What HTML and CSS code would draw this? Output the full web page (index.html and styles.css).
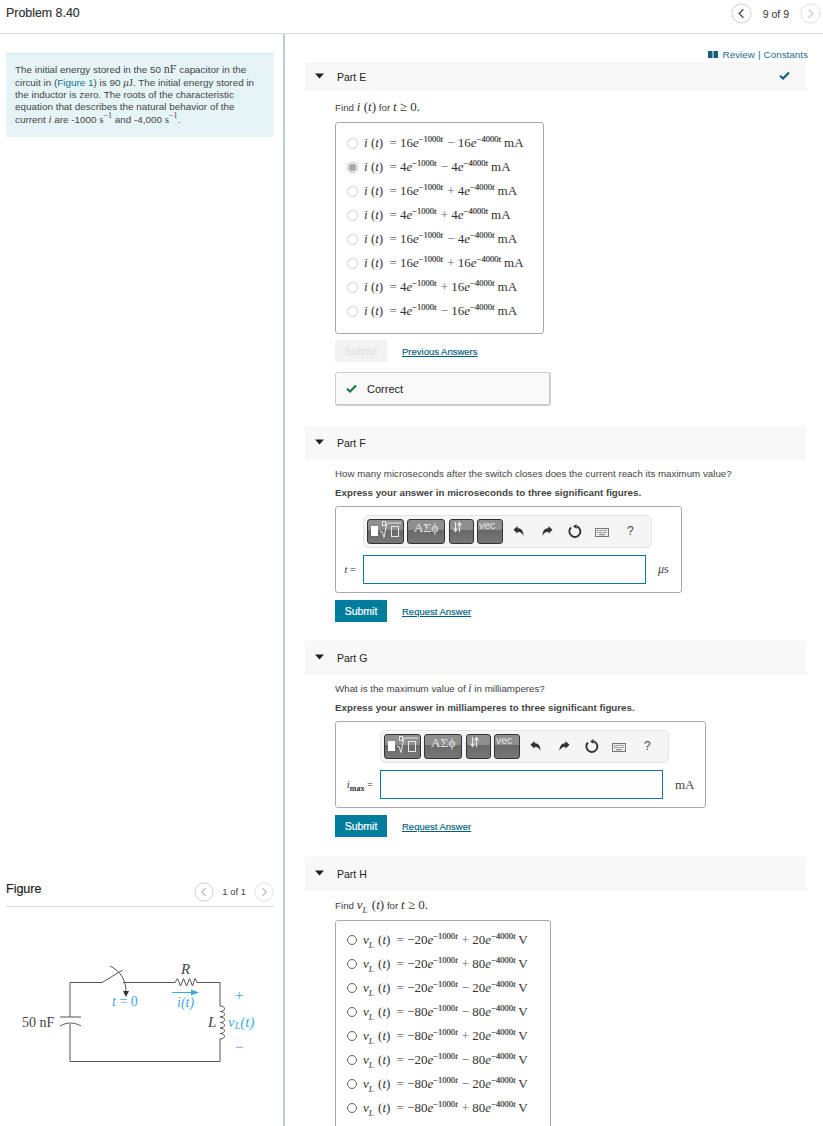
FILE: index.html
```html
<!DOCTYPE html>
<html lang="en">
<head>
<meta charset="utf-8">
<title>Problem 8.40</title>
<link rel="stylesheet" href="styles.css">
</head>
<body>
<svg class="sprites" width="0" height="0" aria-hidden="true">
  <symbol id="undo" viewBox="0 0 12 12"><path d="M0.500 4.500 5 0.500V3c4 0 6.500 2.500 6.500 8.500C10 8 8 6.800 5 6.800V9z" fill="#333"/></symbol>
  <symbol id="redo" viewBox="0 0 12 12"><path d="M11.500 4.500 7 0.500V3c-4 0-6.500 2.500-6.500 8.500C2 8 4 6.800 7 6.800V9z" fill="#333"/></symbol>
  <symbol id="reset" viewBox="0 0 14 14"><path d="M8.800 2.300A5.500 5.500 0 1 1 3 3.500" fill="none" stroke="#333" stroke-width="1.900"/><path d="M8.500 0 5 2.400 8.700 4.800z" fill="#333"/></symbol>
  <symbol id="keys" viewBox="0 0 14 9"><rect x=".5" y=".5" width="13" height="8" fill="#eee" stroke="#777"/><path d="M2 2.500h10M2 4.500h10" stroke="#777" stroke-dasharray="1 .6"/><path d="M4 6.700h6" stroke="#777"/></symbol>
  <symbol id="left" viewBox="0 0 22 22"><circle cx="11" cy="11" r="10" fill="#fff" stroke="#ccc" stroke-width="1"/><path d="M13 6.500 8.500 11l4.500 4.500" fill="none" stroke="currentColor" stroke-width="1.300"/></symbol>
  <symbol id="right" viewBox="0 0 22 22"><circle cx="11" cy="11" r="10" fill="#fff" stroke="#ddd" stroke-width="1"/><path d="M9 6.500 13.500 11 9 15.500" fill="none" stroke="currentColor" stroke-width="1.300"/></symbol>
  <symbol id="tri" viewBox="0 0 9 6"><path d="M0 .5h9L4.500 5.500z" fill="#222"/></symbol>
  <symbol id="check" viewBox="0 0 12 10"><path d="M1 5.200 4.400 8.400 11 1.600" fill="none" stroke="currentColor" stroke-width="2.400"/></symbol>
  <symbol id="radical" viewBox="0 0 22 18"><g fill="none" stroke="#e8e8e8" stroke-width="1"><rect x="2.500" y=".5" width="3" height="4"/><path d="M0 10.500h2l2 6 3-14.500h14"/><rect x="11.500" y="5.500" width="7" height="10"/></g></symbol>
  <symbol id="arrows" viewBox="0 0 9 12"><g fill="none" stroke="#e8e8e8" stroke-width="1.200"><path d="M2.500 1v9M.5 7.500l2 3 2-3"/><path d="M6.500 11V2M4.500 4.500l2-3 2 3"/></g></symbol>
</svg>

<header class="topbar">
  <h1 class="title">Problem 8.40</h1>
  <nav class="pager">
    <svg class="pg-btn dark"><use href="#left"/></svg>
    <span class="pg-label">9 of 9</span>
    <svg class="pg-btn pale"><use href="#right"/></svg>
  </nav>
</header>

<main class="layout">
  <aside class="leftcol">
    <div class="intro">
      The initial energy stored in the 50 <span class="m up">nF</span> capacitor in the circuit in (<a class="fig-link">Figure 1</a>) is 90 <span class="m"><i>μ</i>J</span>. The initial energy stored in the inductor is zero. The roots of the characteristic equation that describes the natural behavior of the current <span class="m"><i>i</i></span> are -1000 <span class="m">s<sup>−1</sup></span> and -4,000 <span class="m">s<sup>−1</sup></span>.
    </div>
    <section class="figure">
      <div class="fig-head">
        <h2 class="fig-title">Figure</h2>
        <div class="fig-pager">
          <svg class="fig-btn"><use href="#left"/></svg>
          <span class="fig-label">1 of 1</span>
          <svg class="fig-btn"><use href="#right"/></svg>
        </div>
      </div>
      <svg class="circuit" width="268" height="160" viewBox="0 0 268 160">
        <g fill="none" stroke="#555" stroke-width="1">
          <path d="M96 71.500H64V106M64 113V150.500H214V128M214 95V71.500H191M117 71.500H169"/>
          <path d="M96 71.500 116.700 59"/>
          <path d="M169 71.500 171.500 67.500 174.500 75 177.500 67.500 180.500 75 183.500 67.500 186.500 75 189 67.500 191 71.500"/>
          <path d="M54 106H75"/>
          <path d="M54 115C61 111 68 111 75 115"/>
          <path d="M214 95c6 0 6 5.500 0 5.500c6 0 6 5.500 0 5.500c6 0 6 5.500 0 5.500c6 0 6 5.500 0 5.500c6 0 6 5.500 0 5.500c6 0 6 5.500 0 5.500"/>
          <path d="M104 55C115 60 120 70 120 81"/>
        </g>
        <path d="M117 80h6l-3 6z" fill="#333"/>
        <path d="M166 81.500H188" stroke="#35a9e0" stroke-width="1"/>
        <path d="M185 78.500 193 81.500 185 84.500z" fill="#35a9e0"/>
        <g class="cir-text">
          <text x="16" y="116" class="dark-t">50 nF</text>
          <text x="175" y="63" class="dark-t it big">R</text>
          <text x="202" y="116" class="dark-t it big">L</text>
          <text x="106" y="95" class="blue-t"><tspan class="it">t</tspan> = 0</text>
          <text x="171" y="96" class="blue-t it">i(t)</text>
          <text x="222" y="116" class="blue-t it big">v<tspan class="sub" dy="2">L</tspan><tspan dy="-2">(t)</tspan></text>
          <text x="229" y="89" class="blue-t big">+</text>
          <text x="229" y="141" class="blue-t big">−</text>
        </g>
      </svg>
    </section>
  </aside>

  <div class="rightcol">
    <div class="review"><svg class="book" width="10" height="7" viewBox="0 0 10 7"><path d="M0 0h4.500v7H0zM5.500 0H10v7H5.500z" fill="#145d78"/></svg><a class="rev-link">Review</a> <span class="rev-sep">|</span> <a class="rev-link">Constants</a></div>

    <section class="part">
      <div class="part-head short">
        <svg class="tri"><use href="#tri"/></svg><span class="part-name">Part E</span>
        <svg class="part-check"><use href="#check"/></svg>
      </div>
      <div class="part-body">
        <p class="find"><span>Find</span> <span class="m"><i>i</i> (<i>t</i>)</span> <span>for</span> <span class="m"><i>t</i> ≥ 0.</span></p>
        <div class="choices e">
          <label class="opt"><span class="radio"></span><span class="m"><i>i</i> (<i>t</i>) <span class="eq">=</span> 16<i>e</i><sup>−1000<i>t</i></sup> <span class="op">−</span> 16<i>e</i><sup>−4000<i>t</i></sup> mA</span></label>
          <label class="opt"><span class="radio on"></span><span class="m"><i>i</i> (<i>t</i>) <span class="eq">=</span> 4<i>e</i><sup>−1000<i>t</i></sup> <span class="op">−</span> 4<i>e</i><sup>−4000<i>t</i></sup> mA</span></label>
          <label class="opt"><span class="radio"></span><span class="m"><i>i</i> (<i>t</i>) <span class="eq">=</span> 16<i>e</i><sup>−1000<i>t</i></sup> <span class="op">+</span> 4<i>e</i><sup>−4000<i>t</i></sup> mA</span></label>
          <label class="opt"><span class="radio"></span><span class="m"><i>i</i> (<i>t</i>) <span class="eq">=</span> 4<i>e</i><sup>−1000<i>t</i></sup> <span class="op">+</span> 4<i>e</i><sup>−4000<i>t</i></sup> mA</span></label>
          <label class="opt"><span class="radio"></span><span class="m"><i>i</i> (<i>t</i>) <span class="eq">=</span> 16<i>e</i><sup>−1000<i>t</i></sup> <span class="op">−</span> 4<i>e</i><sup>−4000<i>t</i></sup> mA</span></label>
          <label class="opt"><span class="radio"></span><span class="m"><i>i</i> (<i>t</i>) <span class="eq">=</span> 16<i>e</i><sup>−1000<i>t</i></sup> <span class="op">+</span> 16<i>e</i><sup>−4000<i>t</i></sup> mA</span></label>
          <label class="opt"><span class="radio"></span><span class="m"><i>i</i> (<i>t</i>) <span class="eq">=</span> 4<i>e</i><sup>−1000<i>t</i></sup> <span class="op">+</span> 16<i>e</i><sup>−4000<i>t</i></sup> mA</span></label>
          <label class="opt"><span class="radio"></span><span class="m"><i>i</i> (<i>t</i>) <span class="eq">=</span> 4<i>e</i><sup>−1000<i>t</i></sup> <span class="op">−</span> 16<i>e</i><sup>−4000<i>t</i></sup> mA</span></label>
        </div>
        <div class="actions e-actions"><button class="btn off">Submit</button><a class="action-link">Previous Answers</a></div>
        <div class="correct"><svg class="c-check"><use href="#check"/></svg><span>Correct</span></div>
      </div>
    </section>

    <section class="part part-f">
      <div class="part-head">
        <svg class="tri"><use href="#tri"/></svg><span class="part-name">Part F</span>
      </div>
      <div class="part-body">
        <p class="q">How many microseconds after the switch closes does the current reach its maximum value?</p>
        <p class="express">Express your answer in microseconds to three significant figures.</p>
        <div class="answer f">
          <div class="toolbar">
            <span class="tb tb1"><span class="blk"></span><svg class="rad"><use href="#radical"/></svg></span>
            <span class="tb tb2">ΑΣϕ</span>
            <span class="tb tb3"><svg class="arr"><use href="#arrows"/></svg></span>
            <span class="tb tb4">vec</span>
            <span class="tools">
              <svg class="ti"><use href="#undo"/></svg>
              <svg class="ti"><use href="#redo"/></svg>
              <svg class="ti rs"><use href="#reset"/></svg>
              <svg class="ti kb"><use href="#keys"/></svg>
              <span class="help">?</span>
            </span>
          </div>
          <div class="entry">
            <span class="var m"><i>t</i> =</span>
            <span class="field"></span>
            <span class="unit m mu"><i>μ</i>s</span>
          </div>
        </div>
        <div class="actions"><button class="btn">Submit</button><a class="action-link">Request Answer</a></div>
      </div>
    </section>

    <section class="part part-g">
      <div class="part-head">
        <svg class="tri"><use href="#tri"/></svg><span class="part-name">Part G</span>
      </div>
      <div class="part-body">
        <p class="q">What is the maximum value of <span class="m"><i>i</i></span> in milliamperes?</p>
        <p class="express">Express your answer in milliamperes to three significant figures.</p>
        <div class="answer g">
          <div class="toolbar">
            <span class="tb tb1"><span class="blk"></span><svg class="rad"><use href="#radical"/></svg></span>
            <span class="tb tb2">ΑΣϕ</span>
            <span class="tb tb3"><svg class="arr"><use href="#arrows"/></svg></span>
            <span class="tb tb4">vec</span>
            <span class="tools">
              <svg class="ti"><use href="#undo"/></svg>
              <svg class="ti"><use href="#redo"/></svg>
              <svg class="ti rs"><use href="#reset"/></svg>
              <svg class="ti kb"><use href="#keys"/></svg>
              <span class="help">?</span>
            </span>
          </div>
          <div class="entry">
            <span class="var m"><i>i</i><sub>max</sub> =</span>
            <span class="field"></span>
            <span class="unit m">mA</span>
          </div>
        </div>
        <div class="actions"><button class="btn">Submit</button><a class="action-link">Request Answer</a></div>
      </div>
    </section>

    <section class="part part-h">
      <div class="part-head">
        <svg class="tri"><use href="#tri"/></svg><span class="part-name">Part H</span>
      </div>
      <div class="part-body">
        <p class="find"><span>Find</span> <span class="m"><i>v</i><sub><i>L</i></sub> (<i>t</i>)</span> <span>for</span> <span class="m"><i>t</i> ≥ 0.</span></p>
        <div class="choices h">
          <label class="opt"><span class="radio dk"></span><span class="m"><i>v</i><sub><i>L</i></sub> (<i>t</i>) <span class="eq">=</span> −20<i>e</i><sup>−1000<i>t</i></sup> <span class="op">+</span> 20<i>e</i><sup>−4000<i>t</i></sup> V</span></label>
          <label class="opt"><span class="radio dk"></span><span class="m"><i>v</i><sub><i>L</i></sub> (<i>t</i>) <span class="eq">=</span> −20<i>e</i><sup>−1000<i>t</i></sup> <span class="op">+</span> 80<i>e</i><sup>−4000<i>t</i></sup> V</span></label>
          <label class="opt"><span class="radio dk"></span><span class="m"><i>v</i><sub><i>L</i></sub> (<i>t</i>) <span class="eq">=</span> −20<i>e</i><sup>−1000<i>t</i></sup> <span class="op">−</span> 20<i>e</i><sup>−4000<i>t</i></sup> V</span></label>
          <label class="opt"><span class="radio dk"></span><span class="m"><i>v</i><sub><i>L</i></sub> (<i>t</i>) <span class="eq">=</span> −80<i>e</i><sup>−1000<i>t</i></sup> <span class="op">−</span> 80<i>e</i><sup>−4000<i>t</i></sup> V</span></label>
          <label class="opt"><span class="radio dk"></span><span class="m"><i>v</i><sub><i>L</i></sub> (<i>t</i>) <span class="eq">=</span> −80<i>e</i><sup>−1000<i>t</i></sup> <span class="op">+</span> 20<i>e</i><sup>−4000<i>t</i></sup> V</span></label>
          <label class="opt"><span class="radio dk"></span><span class="m"><i>v</i><sub><i>L</i></sub> (<i>t</i>) <span class="eq">=</span> −20<i>e</i><sup>−1000<i>t</i></sup> <span class="op">−</span> 80<i>e</i><sup>−4000<i>t</i></sup> V</span></label>
          <label class="opt"><span class="radio dk"></span><span class="m"><i>v</i><sub><i>L</i></sub> (<i>t</i>) <span class="eq">=</span> −80<i>e</i><sup>−1000<i>t</i></sup> <span class="op">−</span> 20<i>e</i><sup>−4000<i>t</i></sup> V</span></label>
          <label class="opt"><span class="radio dk"></span><span class="m"><i>v</i><sub><i>L</i></sub> (<i>t</i>) <span class="eq">=</span> −80<i>e</i><sup>−1000<i>t</i></sup> <span class="op">+</span> 80<i>e</i><sup>−4000<i>t</i></sup> V</span></label>
        </div>
      </div>
    </section>
  </div>
</main>
</body>
</html>
```

FILE: styles.css
```css
html, body { margin: 0; padding: 0; height: 1126px; overflow: hidden; background: #fff; }
body { font-family: "Liberation Sans", Arial, sans-serif; color: #333; font-size: 10px; }
p, h1, h2 { margin: 0; font-weight: normal; }
.sprites { position: absolute; }

.topbar { height: 33px; border-bottom: 1px solid #ddd; display: flex; align-items: center; justify-content: space-between; padding: 0 2px 0 6px; }
.title { font-size: 12.400px; font-weight: normal; color: #333; -webkit-text-stroke: .2px #333; margin-top: -8px; }
.pager { display: flex; align-items: center; gap: 11px; margin-top: -6px; }
.pg-btn { width: 21px; height: 21px; }
.pg-btn.dark { color: #444; }
.pg-btn.pale { color: #ccc; }
.pg-label { font-size: 10.500px; color: #333; }

.layout { display: grid; grid-template-columns: 285px 1fr; height: 1092px; }
.leftcol { border-right: 2px solid #b9cbdc; box-sizing: border-box; padding: 19px 10px 0 6px; }
.intro { background: #e5f5f7; border-top: 1px solid #d3e8ec; width: 268px; box-sizing: border-box; padding: 9px 12px 10px 9px; font-size: 9.900px; line-height: 12px; color: #444; height: 84px; }
.fig-link { color: #1a6f8c; }
.m { font-family: "Liberation Serif", "DejaVu Serif", serif; }
.intro .m { font-size: 11px; }
.intro .m.up { font-size: 12px; }
.intro sup { font-size: 8px; line-height: 0; }

.figure { margin-top: 740px; width: 268px; }
.fig-head { display: flex; justify-content: space-between; align-items: center; height: 29px; border-bottom: 1px solid #ddd; }
.fig-title { font-size: 12.500px; color: #222; -webkit-text-stroke: .2px #222; margin-top: -6px; }
.fig-pager { display: flex; align-items: center; gap: 8px; color: #bbb; }
.fig-btn { width: 20px; height: 20px; }
.fig-label { font-size: 9.500px; color: #444; }
.circuit { display: block; margin-top: 4px; overflow: visible; }
.cir-text text { font-family: "Liberation Serif", serif; font-size: 14px; }
.cir-text .big { font-size: 15px; }
.dark-t { fill: #444; }
.blue-t { fill: #39ace3; }
.it { font-style: italic; }
.cir-text .sub { font-size: 10px; }

.rightcol { padding: 13px 17px 0 20px; }
.review { display: flex; justify-content: flex-end; align-items: center; height: 15px; font-size: 9.900px; color: #1a6f8c; gap: 3px; margin-right: -2px; }
.book { margin-right: 2px; }
.rev-link { color: #1a6f8c; }
.part-head { height: 34px; background: #f8f8f8; display: flex; align-items: center; padding-left: 10px; position: relative; }
.part-head.short { height: 29px; }
.tri { width: 9px; height: 6px; margin-top: -2px; }
.part-name { font-size: 10.500px; color: #222; margin-left: 13px; }
.part-check { position: absolute; right: 16px; top: 9px; width: 11px; height: 9px; color: #155f7c; }
.part-body { padding-left: 30px; }

.find { font-size: 9.800px; color: #444; margin-top: 9px; height: 14px; line-height: 14px; }
.find .m { font-size: 13px; color: #333; }
.find sub, .opt sub { font-size: 9px; line-height: 0; padding-right: 1px; }

.choices { border: 1px solid #aaa; border-radius: 3px; box-sizing: border-box; padding: 8px 0 0 11px; margin-top: 8px; }
.choices.e { width: 209px; height: 212px; }
.choices.h { width: 216px; height: 240px; padding-top: 7px; }
.opt { display: flex; align-items: center; height: 24px; }
.opt .m { font-size: 13px; color: #333; white-space: nowrap; line-height: 24px; }
.opt sup { font-size: 8.500px; line-height: 0; -webkit-text-stroke: .2px #333; }
.eq, .op { color: #666; }
.eq { margin-left: 3px; }
.op { margin-left: 1px; }
.radio { width: 9px; height: 9px; border: 1px solid #ccc; border-radius: 50%; margin-right: 6px; flex: none; background: #fff; }
.radio.on { border-color: #bbb; background: radial-gradient(circle, #aaa 0 3.500px, #fff 4px); }
.radio.dk { border: 1.500px solid #666; width: 8px; height: 8px; }

.actions { display: flex; align-items: center; gap: 15px; margin-top: 7px; }
.e-actions { margin-top: 6px; }
.btn { width: 52px; height: 22px; border: 0; background: #007c9c; color: #fff; font-family: inherit; font-size: 10.500px; -webkit-text-stroke: .2px #fff; padding: 0; }
.btn.off { background: #f3f3f3; color: #ddd; -webkit-text-stroke: 0; }
.action-link { font-size: 9.500px; color: #005e7d; text-decoration: underline; -webkit-text-stroke: .15px #005e7d; }

.correct { width: 216px; height: 34px; margin-top: 10px; border: 1px solid #ccc; border-right-width: 2px; border-bottom-width: 2px; border-radius: 3px; background: #f9f9f9; box-sizing: border-box; display: flex; align-items: center; padding-left: 10px; gap: 10px; font-size: 11px; color: #222; }
.c-check { width: 11px; height: 9px; color: #1a7a45; }

.q { font-size: 9.750px; color: #444; margin-top: 7px; line-height: 13px; height: 13px; }
.q .m { font-size: 12px; }
.express { font-size: 9.750px; font-weight: bold; color: #444; margin-top: 6px; line-height: 13px; height: 13px; }
.answer { border: 1px solid #aaa; border-radius: 3px; box-sizing: border-box; height: 87px; margin-top: 7px; padding: 8px 0 0 27px; }
.answer.f { width: 347px; }
.answer.g { width: 371px; padding-left: 44px; }
.toolbar { width: 289px; height: 33px; box-sizing: border-box; background: #f5f5f5; border: 1px solid #e4e4e4; border-radius: 5px; display: flex; align-items: center; padding-left: 3px; gap: 3px; }
.tb { height: 25px; box-sizing: border-box; border: 1px solid #333; border-radius: 3px; background: linear-gradient(#8f8f8f 0 42%, #686868 42%, #777 100%); color: #e6e6e6; display: flex; justify-content: center; overflow: hidden; }
.tb1 { width: 37px; gap: 2px; padding-top: 1px; justify-content: flex-start; padding-left: 3px; }
.blk { width: 7px; height: 10px; background: #fff; margin-top: 5px; flex: none; }
.rad { width: 22px; height: 18px; flex: none; }
.tb2 { width: 38px; font-family: "Liberation Serif", serif; font-size: 13.500px; line-height: 15px; }
.tb3 { width: 25px; margin-left: 1px; justify-content: flex-start; padding: 1px 0 0 3px; }
.arr { width: 9px; height: 12px; }
.tb4 { width: 26px; font-size: 10.500px; line-height: 10px; justify-content: flex-start; padding-left: 1px; }
.tools { display: flex; align-items: center; gap: 18px; margin-left: 7px; margin-top: -2px; }
.ti { width: 11px; height: 12px; }
.rs { width: 14px; height: 14px; margin-left: -3px; }
.kb { width: 14px; height: 9px; margin-left: -5px; margin-top: 3px; }
.help { font-size: 12px; color: #444; }

.entry { display: flex; align-items: center; margin-top: 7px; position: relative; height: 29px; }
.field { width: 283px; height: 29px; box-sizing: border-box; border: 1px solid #0f7a96; background: #fff; }
.var { position: absolute; right: 100%; margin-right: 7px; font-size: 10.500px; white-space: nowrap; }
.var sub { font-size: 8px; line-height: 0; font-weight: bold; }
.unit { margin-left: 12px; font-size: 13px; color: #444; }
.unit.mu { font-size: 12px; }

.part-f { margin-top: 20px; }
.part-g { margin-top: 19px; }
.part-h { margin-top: 20px; }
.part-h .find { margin-top: 7px; }
.part-h .choices { margin-top: 8px; }
```
